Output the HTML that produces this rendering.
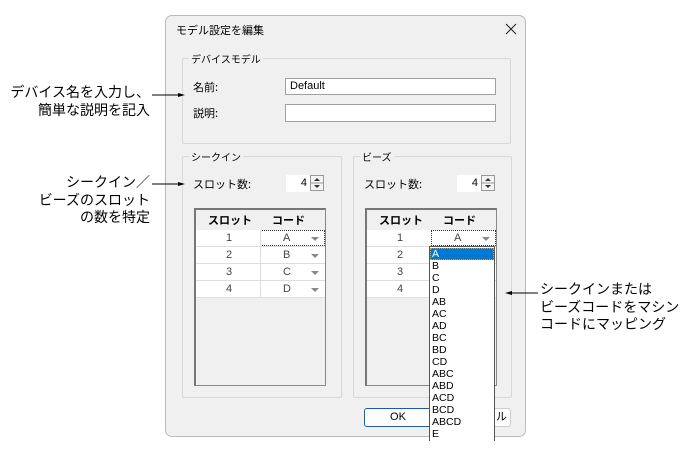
<!DOCTYPE html>
<html><head><meta charset="utf-8"><style>
body{margin:0;width:696px;height:460px;background:#fff;position:relative;overflow:hidden;font-family:"Liberation Sans","Noto Sans CJK JP",sans-serif;}
.a{position:absolute;}
.t{font-size:11px;color:#000;white-space:nowrap;}
.ann{position:absolute;font-size:14px;line-height:17.5px;color:#000;white-space:nowrap;font-family:"Noto Sans CJK JP",sans-serif;}
.grp{position:absolute;border:1px solid #d8d8d8;border-radius:2px;}
.gl{position:absolute;background:#f0f0f0;font-size:10px;padding:0 2px;top:-8px;left:6px;font-family:"Noto Sans CJK JP",sans-serif;}
.inp{position:absolute;background:#fff;border:1px solid #a0a0a0;font-size:11px;box-sizing:border-box;padding-left:4px;line-height:14px;}
.tbl{position:absolute;background:#f0f0f0;border:1px solid #888;border-top:2px solid #777;border-left:2px solid #777;box-sizing:border-box;}
.row{position:absolute;left:0;width:129px;height:17px;background:#fff;border-bottom:1px solid #ddd;box-sizing:border-box;font-size:11px;line-height:16px;color:#444;}
.row span{position:absolute;}
.arr{position:absolute;width:0;height:0;border-left:4px solid transparent;border-right:4px solid transparent;border-top:4px solid #888;}
.spin{position:absolute;width:40px;height:17px;}
</style></head><body>
<!-- annotations -->
<div class="ann" style="right:546px;top:84px;text-align:right">デバイス名を入力し、<br>簡単な説明を記入</div>
<div class="ann" style="right:546px;top:174px;text-align:right">シークイン／<br>ビーズのスロット<br>の数を特定</div>
<div class="ann" style="left:540px;top:281px;">シークインまたは<br>ビーズコードをマシン<br>コードにマッピング</div>
<!-- dialog -->
<div class="a" style="left:165px;top:15px;width:361px;height:422px;background:#f0f0f0;border:1px solid #bbb;border-radius:7px;box-sizing:border-box;"></div>
<div class="a t" style="left:176px;top:22px;font-size:11px;font-family:'Noto Sans CJK JP',sans-serif">モデル設定を編集</div>
<svg class="a" style="left:505px;top:23px" width="12" height="12"><path d="M1 1L11 11M11 1L1 11" stroke="#222" stroke-width="1"/></svg>

<div class="grp" style="left:182px;top:58px;width:327px;height:84px;"><div class="gl">デバイスモデル</div></div>
<div class="a t" style="left:193px;top:79px;font-family:'Noto Sans CJK JP',sans-serif">名前:</div>
<div class="inp" style="left:285px;top:78px;width:211px;height:17px;">Default</div>
<div class="a t" style="left:193px;top:105px;font-family:'Noto Sans CJK JP',sans-serif">説明:</div>
<div class="inp" style="left:285px;top:104px;width:211px;height:18px;"></div>

<div class="grp" style="left:182px;top:156px;width:158px;height:240px;"><div class="gl">シークイン</div></div>
<div class="grp" style="left:353px;top:156px;width:157px;height:240px;"><div class="gl">ビーズ</div></div>

<div class="a t" style="left:193px;top:176px;font-family:'Noto Sans CJK JP',sans-serif">スロット数:</div>
<div class="a t" style="left:364px;top:176px;font-family:'Noto Sans CJK JP',sans-serif">スロット数:</div>

<div class="spin" style="left:286px;top:175px;"><div class="a" style="left:0;top:0;width:24px;height:17px;background:#fff;font-size:11px;text-align:right;line-height:17px;padding-right:3px;box-sizing:border-box">4</div><div class="a" style="left:24px;top:0;width:14px;height:16px;border:1px solid #999;background:#f4f4f4;box-sizing:border-box"><svg width="12" height="14"><path d="M3 5L6 2L9 5Z M3 9L6 12L9 9Z" fill="#333"/><line x1="0" y1="7" x2="12" y2="7" stroke="#999"/></svg></div></div>
<div class="spin" style="left:457px;top:175px;"><div class="a" style="left:0;top:0;width:24px;height:17px;background:#fff;font-size:11px;text-align:right;line-height:17px;padding-right:3px;box-sizing:border-box">4</div><div class="a" style="left:24px;top:0;width:14px;height:16px;border:1px solid #999;background:#f4f4f4;box-sizing:border-box"><svg width="12" height="14"><path d="M3 5L6 2L9 5Z M3 9L6 12L9 9Z" fill="#333"/><line x1="0" y1="7" x2="12" y2="7" stroke="#999"/></svg></div></div>

<!-- left table -->
<div class="tbl" style="left:194px;top:208px;width:132px;height:178px;">
<div class="a" style="left:0;top:0;width:130px;height:20px;font-size:11px;font-weight:bold;font-family:'Noto Sans CJK JP',sans-serif;line-height:20px"><span class="a" style="left:12px">スロット</span><span class="a" style="left:76px">コード</span></div>
<div class="row" style="top:20px"><span style="left:30px">1</span><span style="left:87px">A</span><div class="a" style="left:64px;top:0;width:65px;height:16px;border:1px dotted #333;box-sizing:border-box"></div><div class="arr" style="left:115px;top:7px"></div></div>
<div class="row" style="top:37px"><span style="left:30px">2</span><span style="left:87px">B</span><div class="arr" style="left:115px;top:7px"></div></div>
<div class="row" style="top:54px"><span style="left:30px">3</span><span style="left:87px">C</span><div class="arr" style="left:115px;top:7px"></div></div>
<div class="row" style="top:71px"><span style="left:30px">4</span><span style="left:87px">D</span><div class="arr" style="left:115px;top:7px"></div></div>
<div class="a" style="left:64px;top:20px;width:1px;height:68px;background:#ddd"></div>
</div>
<!-- right table -->
<div class="tbl" style="left:365px;top:208px;width:132px;height:178px;">
<div class="a" style="left:0;top:0;width:130px;height:20px;font-size:11px;font-weight:bold;font-family:'Noto Sans CJK JP',sans-serif;line-height:20px"><span class="a" style="left:12px">スロット</span><span class="a" style="left:76px">コード</span></div>
<div class="row" style="top:20px"><span style="left:30px">1</span><span style="left:87px">A</span><div class="a" style="left:64px;top:0;width:65px;height:16px;border:1px dotted #333;box-sizing:border-box"></div><div class="arr" style="left:115px;top:7px"></div></div>
<div class="row" style="top:37px"><span style="left:30px">2</span></div>
<div class="row" style="top:54px"><span style="left:30px">3</span></div>
<div class="row" style="top:71px"><span style="left:30px">4</span></div>
</div>

<!-- buttons -->
<div class="a" style="left:364px;top:408px;width:68px;height:19px;border:1px solid #0067c0;border-radius:3px;background:#fdfdfd;box-sizing:border-box;font-size:11px;text-align:center;line-height:17px">OK</div>
<div class="a" style="left:430px;top:408px;width:81px;height:19px;border:1px solid #ccc;border-radius:3px;background:#fdfdfd;box-sizing:border-box;font-size:11px;line-height:17px;padding-left:65px">ル</div>

<!-- dropdown list -->
<div class="a" style="left:429px;top:246px;width:66px;height:195px;background:#fff;border:1px solid #555;border-bottom:none;box-sizing:border-box;font-size:10.5px;line-height:12px;">
<div style="background:#0078d7;color:#fff;outline:1px dotted #f90;outline-offset:-1px;padding-left:2px;margin-top:1px">A</div>
<div style="padding-left:2px">B<br>C<br>D<br>AB<br>AC<br>AD<br>BC<br>BD<br>CD<br>ABC<br>ABD<br>ACD<br>BCD<br>ABCD<br>E</div>
</div>

<svg class="a" style="left:0;top:0;z-index:5" width="696" height="460">
<line x1="152" y1="95" x2="183" y2="95" stroke="#000" stroke-width="1"/><path d="M185 95 L178 93 L178 97Z"/>
<line x1="152" y1="184" x2="183" y2="184" stroke="#000"/><path d="M185 184 L178 182 L178 186Z"/>
<line x1="507" y1="293" x2="538" y2="293" stroke="#000"/><path d="M505 293 L512 291 L512 295Z"/>
</svg>
</body></html>
